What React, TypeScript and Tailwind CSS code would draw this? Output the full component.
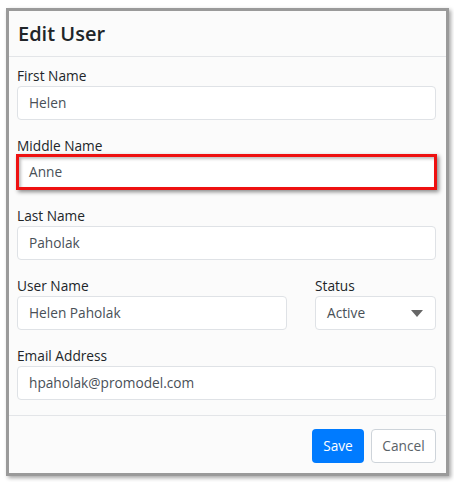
import React from "react";

const font = { fontFamily: '"Open Sans", "Noto Sans", sans-serif' };

function Field({ label, value, className = "" }: { label: string; value: string; className?: string }) {
  return (
    <div className={"flex flex-col " + className}>
      <label className="text-[13.7px] leading-[21px] text-[#212529]">{label}</label>
      <div className="h-[34px] bg-white border border-[#dfe2e6] rounded-[4px] flex items-center px-[11px] text-[13.7px] text-[#495057]">
        {value}
      </div>
    </div>
  );
}

export default function App() {
  return (
    <div className="w-[454px] h-[482px] bg-white pt-[8px] pl-[6px]" style={font}>
      <div className="w-[443px] h-[468px] border-[3px] border-[#9a9a9a] shadow-[2px_2px_4px_rgba(0,0,0,0.35)] bg-[#fbfbfb] flex flex-col">
        <div className="h-[46px] border-b border-[#e3e5e8] flex items-center pl-[9px]">
          <h1 className="text-[20px] font-semibold text-[#212529] leading-none">Edit User</h1>
        </div>
        <div className="flex flex-col pl-[8px] pr-[10px] pt-[8px] gap-[15px] pb-[15px] border-b border-[#e3e5e8]">
          <Field label="First Name" value="Helen" />
          <div className="flex flex-col">
            <label className="text-[13.7px] leading-[21px] text-[#212529]">Middle Name</label>
            <div className="-mx-[1px] -mt-[2px] h-[36px] bg-white border-[3px] border-[#ee1111] shadow-[2px_2px_4px_rgba(0,0,0,0.45),inset_2px_2px_3px_rgba(0,0,0,0.25)] flex items-center px-[10px] text-[13.7px] text-[#495057]">
              Anne
            </div>
          </div>
          <Field label="Last Name" value="Paholak" />
          <div className="flex gap-[28px]">
            <Field label="User Name" value="Helen Paholak" className="w-[270px]" />
            <div className="flex flex-col flex-1">
              <label className="text-[13.7px] leading-[21px] text-[#212529]">Status</label>
              <div className="h-[34px] bg-white border border-[#dfe2e6] rounded-[4px] flex items-center justify-between pl-[11px] pr-[12px] text-[13.7px] text-[#495057]">
                <span>Active</span>
                <svg width="12" height="7" viewBox="0 0 12 7">
                  <path d="M0 0 L12 0 L6 7 Z" fill="#666" />
                </svg>
              </div>
            </div>
          </div>
          <Field label="Email Address" value="hpaholak@promodel.com" />
        </div>
        <div className="flex justify-end gap-[7px] pr-[10px] pt-[13px]">
          <button className="h-[34px] w-[52px] rounded-[4px] bg-[#007bff] text-white text-[13.7px]">Save</button>
          <button className="h-[34px] w-[65px] rounded-[4px] bg-white border border-[#ced4da] text-[#5a6268] text-[13.7px]">Cancel</button>
        </div>
      </div>
    </div>
  );
}
